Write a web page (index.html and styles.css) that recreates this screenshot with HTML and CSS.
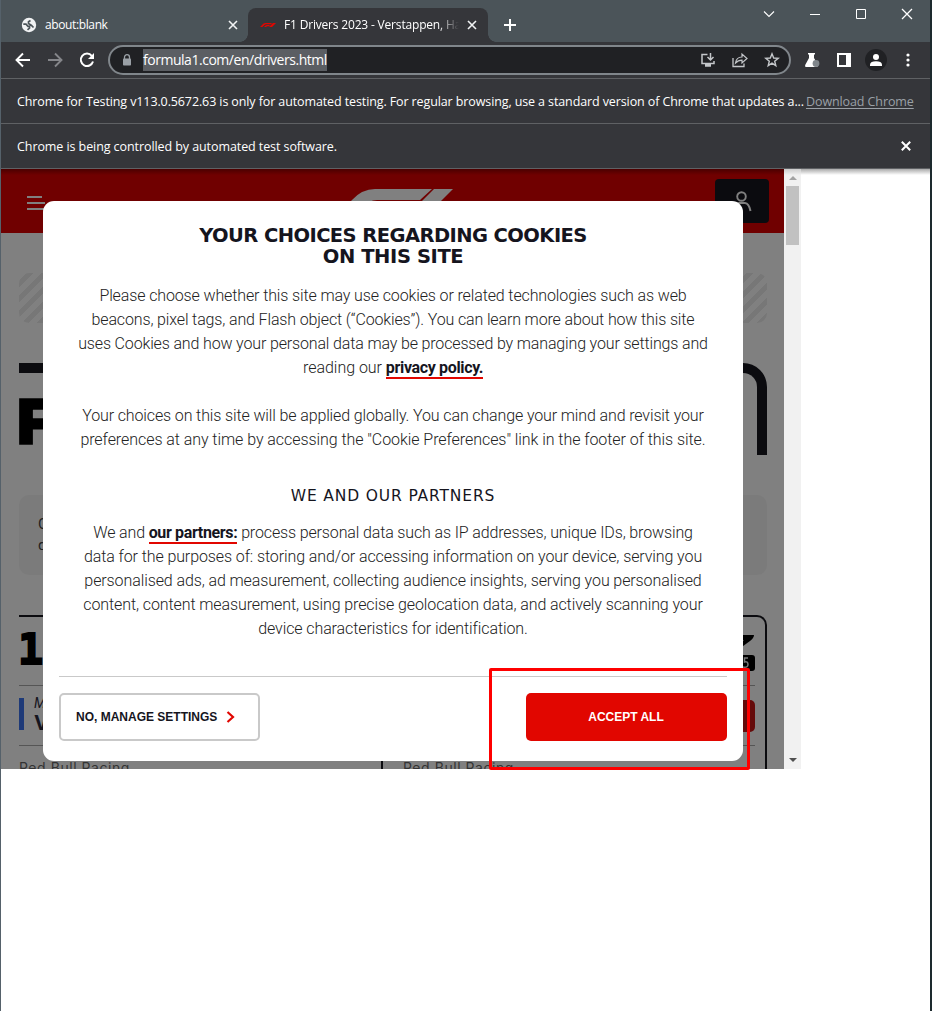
FILE: index.html
```html
<!DOCTYPE html>
<html lang="en">
<head>
<meta charset="utf-8">
<title>F1 Drivers 2023</title>
<link rel="stylesheet" href="styles.css">
</head>
<body>
<div class="window">
  <div class="tabstrip">
    <div class="tab tab-idle">
      <svg class="globe" width="16" height="16" viewBox="0 0 16 16"><circle cx="8" cy="8" r="7.2" fill="#f1f3f4"/><path d="M2.300 7.200H5L7 9.300H8.500V11.200L6.500 12.800M12.500 10.500L10.500 8.500L7.500 6.500V4.800L9.500 3.500" fill="none" stroke="#4b5459" stroke-width="1.700"/></svg>
      <span class="tab-title t-blank">about:blank</span>
      <svg width="10" height="10" viewBox="0 0 10 10"><path d="M1 1L9 9M9 1L1 9" stroke="#f1f3f4" stroke-width="1.6"/></svg>
    </div>
    <div class="tab tab-active">
      <svg width="16" height="16" viewBox="0 0 16 16"><path d="M0 10 L3.5 6.6 Q4.3 6 5.5 6 H12 L11 7.2 H6 Q5.2 7.2 4.7 7.7 L2.4 10Z M4 10 L5.5 8.5 Q6 8 7 8 H10 L9 9.2 H7 L6.2 10Z M9 10 L13 6 H16 L12 10Z" fill="#e10600"/></svg>
      <span class="tab-title t-f1">F1 Drivers 2023 - Verstappen, Ham</span>
      <svg width="10" height="10" viewBox="0 0 10 10"><path d="M1 1L9 9M9 1L1 9" stroke="#f1f3f4" stroke-width="1.6"/></svg>
    </div>
    <svg class="plus" width="12" height="12" viewBox="0 0 12 12"><path d="M6 0V12M0 6H12" stroke="#fff" stroke-width="2"/></svg>
    <div class="controls">
      <svg width="12" height="12" viewBox="0 0 12 12"><path d="M1 3.500L6 8.500L11 3.500" fill="none" stroke="#fff" stroke-width="1.100"/></svg>
      <svg width="10" height="12" viewBox="0 0 10 12"><path d="M0 6.500H10" stroke="#fff"/></svg>
      <svg width="10" height="12" viewBox="0 0 10 12"><path d="M.5 1.500H9.500V10.500H.5Z" fill="none" stroke="#fff"/></svg>
      <svg width="12" height="12" viewBox="0 0 12 12"><path d="M1 1L11 11M11 1L1 11" stroke="#fff" stroke-width="1.3"/></svg>
    </div>
  </div>

  <div class="toolbar">
    <svg class="nav" width="16" height="16" viewBox="0 0 16 16"><path d="M15 8H2M8 1.500L1.500 8L8 14.500" fill="none" stroke="#fff" stroke-width="1.900"/></svg>
    <svg class="nav" width="16" height="16" viewBox="0 0 16 16"><path d="M1 8H14M8 1.500L14.500 8L8 14.500" fill="none" stroke="#85868a" stroke-width="1.900"/></svg>
    <svg class="nav" width="16" height="16" viewBox="0 0 16 16"><path d="M12.800 3.800A6.200 6.200 0 1 0 14 9.500" fill="none" stroke="#fff" stroke-width="2"/><path d="M15 1V7H9Z" fill="#fff"/></svg>
    <div class="omnibox">
      <svg width="10" height="12" viewBox="0 0 10 12"><path d="M2.500 5V3.200A2.500 2.500 0 0 1 7.500 3.200V5" fill="none" stroke="#9aa0a6" stroke-width="1.300"/><rect x="1" y="4.500" width="8" height="7" rx=".8" fill="#9aa0a6"/></svg>
      <span class="url">formula1.com/en/drivers.html</span>
      <div class="omni-icons">
        <svg width="16" height="16" viewBox="0 0 16 16"><path d="M7.500 2.500H2V11.500H14V9M5 14H11M5 13H11" fill="none" stroke="#c4c7ca" stroke-width="1.500"/><path d="M10.500 1V7.500M7.500 5L10.500 8L13.500 5" fill="none" stroke="#c4c7ca" stroke-width="1.500"/></svg>
        <svg width="16" height="16" viewBox="0 0 16 16"><path d="M1 6V14.500H12V11.500" fill="none" stroke="#c4c7ca" stroke-width="1.300"/><path d="M3.500 11C4 7.500 6.500 5 10 5V2L15 6.500L10 11V8.200C7.500 8.200 5.500 8.800 3.500 11Z" fill="none" stroke="#c4c7ca" stroke-width="1.200"/></svg>
        <svg width="16" height="16" viewBox="0 0 16 16"><path d="M8 1.800L9.700 6L14.200 6.300L10.700 9.200L11.800 13.700L8 11.200L4.200 13.700L5.300 9.200L1.800 6.300L6.300 6Z" fill="none" stroke="#c4c7ca" stroke-width="1.400"/></svg>
      </div>
    </div>
    <div class="actions">
      <svg width="16" height="16" viewBox="0 0 16 16"><path d="M4 1H11V2.500H10V6L14 13Q14 15 12.500 15H2Q.5 15 1.200 13L5 6V2.500H4Z" fill="#fff"/><circle cx="12" cy="11.500" r="3.400" fill="#80868b"/></svg>
      <svg width="14" height="14" viewBox="0 0 14 14"><path d="M0 0H14V14H0ZM2 2V12H9V2Z" fill="#fff" fill-rule="evenodd"/></svg>
      <svg width="22" height="22" viewBox="0 0 22 22"><circle cx="11" cy="11" r="11" fill="#202124"/><circle cx="11" cy="8" r="3" fill="#fff"/><path d="M5 17V15.500Q5.500 12.300 11 12.300T17 15.500V17Z" fill="#fff"/></svg>
      <svg width="4" height="16" viewBox="0 0 4 16"><circle cx="2" cy="3" r="1.600" fill="#fff"/><circle cx="2" cy="8" r="1.600" fill="#fff"/><circle cx="2" cy="13" r="1.600" fill="#fff"/></svg>
    </div>
  </div>

  <div class="infobar">
    <span class="info-a">Chrome for Testing v113.0.5672.63 is only for automated testing. For regular browsing, use a standard version of Chrome that updates a...</span>
    <span class="download">Download Chrome</span>
  </div>
  <div class="infobar">
    <span class="info-b">Chrome is being controlled by automated test software.</span>
    <svg class="info-close" width="10" height="10" viewBox="0 0 10 10"><path d="M.8 .8L9.200 9.200M9.200 .8L.8 9.200" stroke="#fff" stroke-width="2"/></svg>
  </div>

  <div class="content">
    <div class="viewport">
      <div class="page">
        <div class="header">
          <svg class="burger" width="18" height="14" viewBox="0 0 18 14"><path d="M0 1H15M0 7H18M0 13H18" stroke="#808080" stroke-width="2"/></svg>
          <svg class="logo" width="104" height="26" viewBox="0 0 104 26"><path d="M-10 24L3 11Q13 0 26 0H83L71 11H28Q20 11 13 18L6 26Z M85 0H104L78 26H59Z" fill="#808080"/></svg>
          <div class="account"><svg width="20" height="24" viewBox="0 0 20 24"><circle cx="9.500" cy="6.500" r="4.300" fill="none" stroke="#808080" stroke-width="1.900"/><path d="M1 21Q2 13.500 7 13H13Q17 13.500 18.500 21" fill="none" stroke="#808080" stroke-width="2"/></svg></div>
        </div>
        <div class="stripes"></div>
        <div class="hero">F1 Drivers 2023</div>
        <div class="intro">Check out this season's official F1 line-up.<br>driver biographies, statistics and more</div>
        <div class="cards">
          <div class="card">
            <div class="rank">1</div>
            <div class="driver"><i class="team-bar"></i><div><div class="first">Max</div><div class="last">Verstappen</div></div></div>
            <div class="team">Red Bull Racing</div>
          </div>
          <div class="card">
            <div class="rank"><span>2</span><svg width="36" height="38" viewBox="0 0 36 38"><path d="M12 1H35Q35 4 31 7L20 15H14L25 6H12Z" fill="#000"/><rect x="0" y="21" width="36" height="16" rx="3"/><path d="M29 24H25.500V28Q29 27 29 30.500T24 33" stroke="#777" stroke-width="1.500" fill="none"/></svg></div>
            <div class="driver"><i class="team-bar"></i><div><div class="first">Sergio</div><div class="last">Perez</div></div><div class="helmet"></div></div>
            <div class="team">Red Bull Racing</div>
          </div>
        </div>
      </div>
      <div class="scrollbar"><i class="up"></i><i class="thumb"></i><i class="down"></i></div>

      <div class="modal">
        <h1><span class="h1a">YOUR CHOICES REGARDING COOKIES</span><span class="h1b">ON THIS SITE</span></h1>
        <p class="copy first-copy">
          <span class="a1">Please choose whether this site may use cookies or related technologies such as web</span>
          <span class="a2">beacons, pixel tags, and Flash object (“Cookies”). You can learn more about how this site</span>
          <span class="a3">uses Cookies and how your personal data may be processed by managing your settings and</span>
          <span class="a4">reading our <b>privacy policy.</b></span>
        </p>
        <p class="copy">
          <span class="b1">Your choices on this site will be applied globally. You can change your mind and revisit your</span>
          <span class="b2">preferences at any time by accessing the "Cookie Preferences" link in the footer of this site.</span>
        </p>
        <h2>WE AND OUR PARTNERS</h2>
        <p class="copy">
          <span class="c1">We and <b>our partners:</b> process personal data such as IP addresses, unique IDs, browsing</span>
          <span class="c2">data for the purposes of: storing and/or accessing information on your device, serving you</span>
          <span class="c2">personalised ads, ad measurement, collecting audience insights, serving you personalised</span>
          <span class="c2">content, content measurement, using precise geolocation data, and actively scanning your</span>
          <span class="c2">device characteristics for identification.</span>
        </p>
        <div class="buttons">
          <div class="btn manage"><span>NO, MANAGE SETTINGS</span><svg width="9" height="12" viewBox="0 0 9 12"><path d="M1.500 1L7 6L1.500 11" fill="none" stroke="#e10600" stroke-width="2.200"/></svg></div>
          <div class="btn accept">ACCEPT ALL</div>
        </div>
      </div>
      <div class="highlight"></div>
    </div>
  </div>
</div>
</body>
</html>
```

FILE: styles.css
```css
* { box-sizing: border-box; }
body { margin: 0; background: #fff; }
svg { display: block; flex: none; }
.window { width: 932px; height: 1011px; border-left: 1px solid #55616a; border-right: 2px solid #1d2a2e; background: #fff; overflow: hidden; font-family: "Open Sans", "Noto Sans", sans-serif; font-size: 12px; color: #fff; display: flex; flex-direction: column; }
.tabstrip { height: 42px; flex: none; background: #4b5459; display: flex; align-items: flex-end; }
.tab { height: 34px; display: flex; align-items: center; white-space: nowrap; }
.tab-idle { width: 247px; padding: 0 10px 0 20px; gap: 8px; border-bottom-right-radius: 8px; }
.tab-active { width: 240px; padding: 0 11px 0 12px; gap: 8px; background: #35363a; border-radius: 8px 8px 0 0; position: relative; }
.tab-active::before, .tab-active::after { content: ""; position: absolute; bottom: 0; width: 8px; height: 8px; }
.tab-active::before { left: -8px; background: radial-gradient(circle at 0 0, transparent 7.5px, #35363a 8px); }
.tab-active::after { right: -8px; background: radial-gradient(circle at 100% 0, transparent 7.5px, #35363a 8px); }
.tab-title { flex: 1; overflow: hidden; line-height: 18px; margin-top: -1px; }
.t-blank { letter-spacing: -.38px; }
.t-f1 { letter-spacing: -.18px; -webkit-mask-image: linear-gradient(90deg, #000 88%, transparent); mask-image: linear-gradient(90deg, #000 88%, transparent); }
.plus { margin: 0 0 11px 16px; }
.controls { margin-left: auto; height: 42px; padding: 8px 17px 0 0; display: flex; }
.controls svg { margin-left: 35px; }
.controls svg:nth-child(3) { margin-left: 36px; }
.toolbar { height: 37px; flex: none; background: #35363a; border-bottom: 1px solid #5f6164; display: flex; align-items: center; padding-left: 14px; }
.nav { margin-right: 16px; }
.omnibox { width: 683px; height: 30px; margin-left: -3px; border: 2px solid #80868b; border-radius: 15px; background: #202124; display: flex; align-items: center; padding: 0 9px 0 12px; }
.url { margin-left: 11px; background: #5b5e63; height: 22px; line-height: 21px; font-size: 14px; letter-spacing: -.47px; white-space: nowrap; }
.omni-icons { margin-left: auto; display: flex; gap: 16px; }
.actions { margin-left: 13px; display: flex; align-items: center; gap: 16px; }
.actions svg:nth-child(2) { margin-left: 1px; }
.actions svg:nth-child(3) { margin-left: -2px; }
.actions svg:nth-child(4) { margin-left: 3px; }
.infobar { height: 45px; flex: none; background: #35363a; border-bottom: 1px solid #5f6164; display: flex; align-items: center; padding: 0 16px; white-space: nowrap; font-size: 12.5px; }
.info-a { letter-spacing: -.11px; width: 789px; }
.info-b { letter-spacing: -.08px; }
.download { letter-spacing: -.1px; color: #9aa0a6; text-decoration: underline; text-underline-offset: 2px; }
.info-close { margin: 0 3px 0 auto; }
.content { height: 600px; flex: none; background: linear-gradient(#aaa, #fff 6px); }
.viewport { width: 800px; height: 600px; display: flex; position: relative; }
.page { width: 783px; height: 600px; overflow: hidden; background: #808080; color: #15151e; }
.header { height: 64px; background: linear-gradient(#4a0000, #700000 6px); display: flex; align-items: flex-start; padding: 10px 15px 0 26px; }
.burger { margin-top: 17px; }
.logo { margin: 10px 0 0 304px; overflow: visible; }
.account { margin-left: auto; width: 54px; height: 44px; border-radius: 4px; background: #0b0b0f; display: flex; justify-content: center; padding-top: 11px; }
.stripes { margin: 40px 17px 0 18px; height: 50px; border-radius: 10px; background: repeating-linear-gradient(135deg, #808080 0 5.500px, #777 5.500px 10.600px); }
.hero { margin: 40px 17px 0 18px; height: 92px; border: solid #0b0b0f; border-width: 10px 10px 0 0; border-top-right-radius: 24px; padding-top: 17px; font: 900 62px/64px Inter, sans-serif; color: #000; white-space: nowrap; text-indent: -2px; -webkit-text-stroke: 1.5px #000; }
.intro { margin: 40px 17px 0 18px; height: 80px; border-radius: 10px; background: #7b7b7b; padding: 19px; font: 15px/21px Roboto, sans-serif; color: #222; }
.cards { margin: 40px 17px 0 18px; display: grid; grid-template-columns: 364px 364px; gap: 20px; }
.card { height: 200px; border: solid #0b0b0f; border-width: 2px 2px 0 0; border-top-right-radius: 10px; padding-right: 10px; }
.rank { height: 69px; border-bottom: 1px solid #555; display: flex; justify-content: space-between; padding-top: 17px; font: 700 42px/31px "DejaVu Sans Mono", monospace; -webkit-text-stroke: 2px #000; color: #000; text-indent: -1px; }
.rank svg { -webkit-text-stroke: 0; }
.driver { height: 60px; border-bottom: 1px solid #555; display: flex; padding-top: 12px; gap: 10px; }
.team-bar { width: 5px; height: 32px; background: #1e3a78; }
.first { font: italic 14px/14px Roboto, sans-serif; margin-top: -2px; }
.last { font: 700 20px/22px Inter, sans-serif; margin-top: 2px; }
.helmet { margin: 2px 0 0 auto; width: 45px; height: 32px; border-radius: 5px; background: #650b0b; }
.team { padding-top: 13px; font: 14px/18px Inter, sans-serif; letter-spacing: .55px; color: #333; }
.scrollbar { width: 17px; height: 600px; background: linear-gradient(#ccc, #f1f1f1 6px); display: flex; flex-direction: column; align-items: center; }
.up { margin-top: 7px; border: 4px solid transparent; border-top: 0; border-bottom-color: #a3a3a3; }
.thumb { margin-top: 6px; width: 13px; height: 59px; background: #c1c1c1; }
.down { margin: auto 0 7px; border: 4px solid transparent; border-bottom: 0; border-top-color: #505050; }
.modal { position: absolute; left: 42px; top: 32px; width: 700px; height: 560px; background: #fff; border-radius: 11px; padding: 24px 16px 0; text-align: center; display: flex; flex-direction: column; color: #15151e; }
h1 { margin: 0; font: 700 19.500px/21px "DejaVu Sans", sans-serif; }
h1 span, .copy > span { display: block; white-space: nowrap; }
.h1a { letter-spacing: -.57px; }
.h1b { letter-spacing: -.4px; }
.copy { margin: 0 0 24px; font: 300 16px/24px Roboto, "Open Sans", sans-serif; color: #222; }
.first-copy { margin-top: 17px; }
.a1 { letter-spacing: -.125px; }
.a2 { letter-spacing: -.14px; }
.a3 { letter-spacing: -.15px; }
.a4 { letter-spacing: -.03px; }
.b1 { letter-spacing: -.127px; }
.b2 { letter-spacing: -.06px; }
.c1 { letter-spacing: -.14px; }
.c2 { letter-spacing: -.1px; }
.copy b { font-weight: 700; color: #15151e; box-shadow: 0 2px #e10600; line-height: 19px; display: inline-block; letter-spacing: -.35px; }
h2 { margin: 9px 0 14px; font: 400 15.500px/22px "DejaVu Sans", sans-serif; letter-spacing: .85px; }
.buttons { margin-top: 11px; border-top: 1px solid #c9c9c9; padding-top: 16px; display: flex; justify-content: space-between; }
.btn { width: 201px; height: 48px; border-radius: 5px; font: 700 12px/15px "Liberation Sans", sans-serif; display: flex; align-items: center; }
.manage { border: 2px solid #c9c9c9; padding-left: 15px; gap: 9px; color: #15151e; white-space: nowrap; }
.accept { background: #e10600; color: #fff; justify-content: center; padding-right: 1px; }
.highlight { position: absolute; left: 488px; top: 499px; width: 261px; height: 102px; border: 3px solid #f00; border-radius: 2px; }
```
